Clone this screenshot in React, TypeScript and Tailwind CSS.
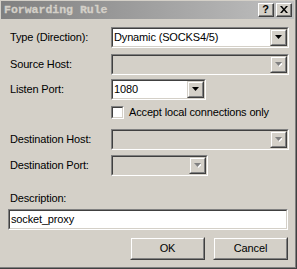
import React from "react";

const font = { fontFamily: '"Liberation Sans", Arial, sans-serif', letterSpacing: "-0.15px" };

function Arrow({ disabled }: { disabled?: boolean }) {
  return (
    <svg width="7" height="5" viewBox="0 0 7 5" className="block">
      {disabled && <path d="M1 1h7L4.5 5z" fill="#ffffff" />}
      <path d="M0 0h7L3.5 4z" fill={disabled ? "#808080" : "#000000"} />
    </svg>
  );
}

function Raised({ className, children }: { className?: string; children?: React.ReactNode }) {
  return (
    <div className={"border-t border-l border-[#d4d0c8] border-r border-b border-r-[#404040] border-b-[#404040] " + (className || "")}>
      <div className="w-full h-full border-t border-l border-white border-r border-b border-r-[#808080] border-b-[#808080] bg-[#d4d0c8] flex items-center justify-center">
        {children}
      </div>
    </div>
  );
}

function Sunken({ className, children, bg }: { className?: string; children?: React.ReactNode; bg: string }) {
  return (
    <div className={"border-t border-l border-[#808080] border-r border-b border-r-white border-b-white " + (className || "")}>
      <div className={"w-full h-full border-t border-l border-[#404040] border-r border-b border-r-[#d4d0c8] border-b-[#d4d0c8] flex items-center " + bg}>
        {children}
      </div>
    </div>
  );
}

function Combo({ w, value, disabled }: { w: string; value?: string; disabled?: boolean }) {
  return (
    <Sunken className={w + " h-[21px]"} bg={disabled ? "bg-[#d4d0c8]" : "bg-white"}>
      <div className="flex-1 pl-[1px] text-[11px] text-black leading-none truncate">{value}</div>
      <Raised className="w-[17px] h-[17px]">
        <Arrow disabled={disabled} />
      </Raised>
    </Sunken>
  );
}

function Row({ label, children, mt }: { label: string; children: React.ReactNode; mt: string }) {
  return (
    <div className={"flex items-center " + mt}>
      <div className="w-[101px] text-[11px] text-black leading-none">{label}</div>
      {children}
    </div>
  );
}

function CapBtn({ children }: { children: React.ReactNode }) {
  return (
    <div className="w-[16px] h-[14px] border-t border-l border-white border-r border-b border-r-[#404040] border-b-[#404040]">
      <div className="w-full h-full border-r border-b border-[#808080] bg-[#d4d0c8] flex items-center justify-center">
        {children}
      </div>
    </div>
  );
}

export default function App() {
  return (
    <div className="w-[297px] h-[269px] bg-[#d4d0c8] border-r border-b border-[#404040]" style={font}>
      <div className="w-full h-full border-r border-b border-[#808080] pt-[1px] pl-[1px] pr-[1px] flex flex-col">
        <div className="h-[18px] flex items-center bg-gradient-to-r from-[#808080] to-[#c0c0c0] pl-[3px] pr-[2px]">
          <div
            className="flex-1 text-[11.5px] font-bold text-[#d4d0c8] leading-none"
            style={{ fontFamily: '"Liberation Mono", "Courier New", monospace', letterSpacing: "0px", WebkitTextStroke: "0.3px #d4d0c8" }}
          >
            Forwarding Rule
          </div>
          <div className="flex gap-[2px]">
            <CapBtn>
              <span className="text-[11px] font-bold text-black leading-none">?</span>
            </CapBtn>
            <CapBtn>
              <svg width="8" height="7" viewBox="0 0 8 7">
                <path d="M0 0h2l2 2.5L6 0h2L5 3.5 8 7H6L4 4.5 2 7H0l3-3.5z" fill="#000" />
              </svg>
            </CapBtn>
          </div>
        </div>
        <div className="pl-[9px] flex flex-col">
          <Row label="Type (Direction):" mt="mt-[8px]">
            <Combo w="w-[178px]" value="Dynamic (SOCKS4/5)" />
          </Row>
          <Row label="Source Host:" mt="mt-[6px]">
            <Combo w="w-[178px]" disabled />
          </Row>
          <Row label="Listen Port:" mt="mt-[4px]">
            <Combo w="w-[95px]" value="1080" />
          </Row>
          <div className="flex items-center mt-[6px] ml-[101px]">
            <Sunken className="w-[13px] h-[13px]" bg="bg-white" />
            <span className="ml-[5px] text-[11px] text-black leading-none">Accept local connections only</span>
          </div>
          <Row label="Destination Host:" mt="mt-[10px]">
            <Combo w="w-[178px]" disabled />
          </Row>
          <Row label="Destination Port:" mt="mt-[5px]">
            <Combo w="w-[97px]" disabled />
          </Row>
          <div className="mt-[17px] text-[11px] text-black leading-none">Description:</div>
          <Sunken className="w-[280px] h-[21px] mt-[5px] -ml-[2px]" bg="bg-white">
            <span className="pl-[1px] text-[11px] text-black leading-none">socket_proxy</span>
          </Sunken>
          <div className="flex justify-end gap-[8px] mt-[7px] pr-[6px]">
            <Raised className="w-[75px] h-[23px]">
              <span className="text-[11px] text-black leading-none">OK</span>
            </Raised>
            <Raised className="w-[75px] h-[23px]">
              <span className="text-[11px] text-black leading-none">Cancel</span>
            </Raised>
          </div>
        </div>
      </div>
    </div>
  );
}
